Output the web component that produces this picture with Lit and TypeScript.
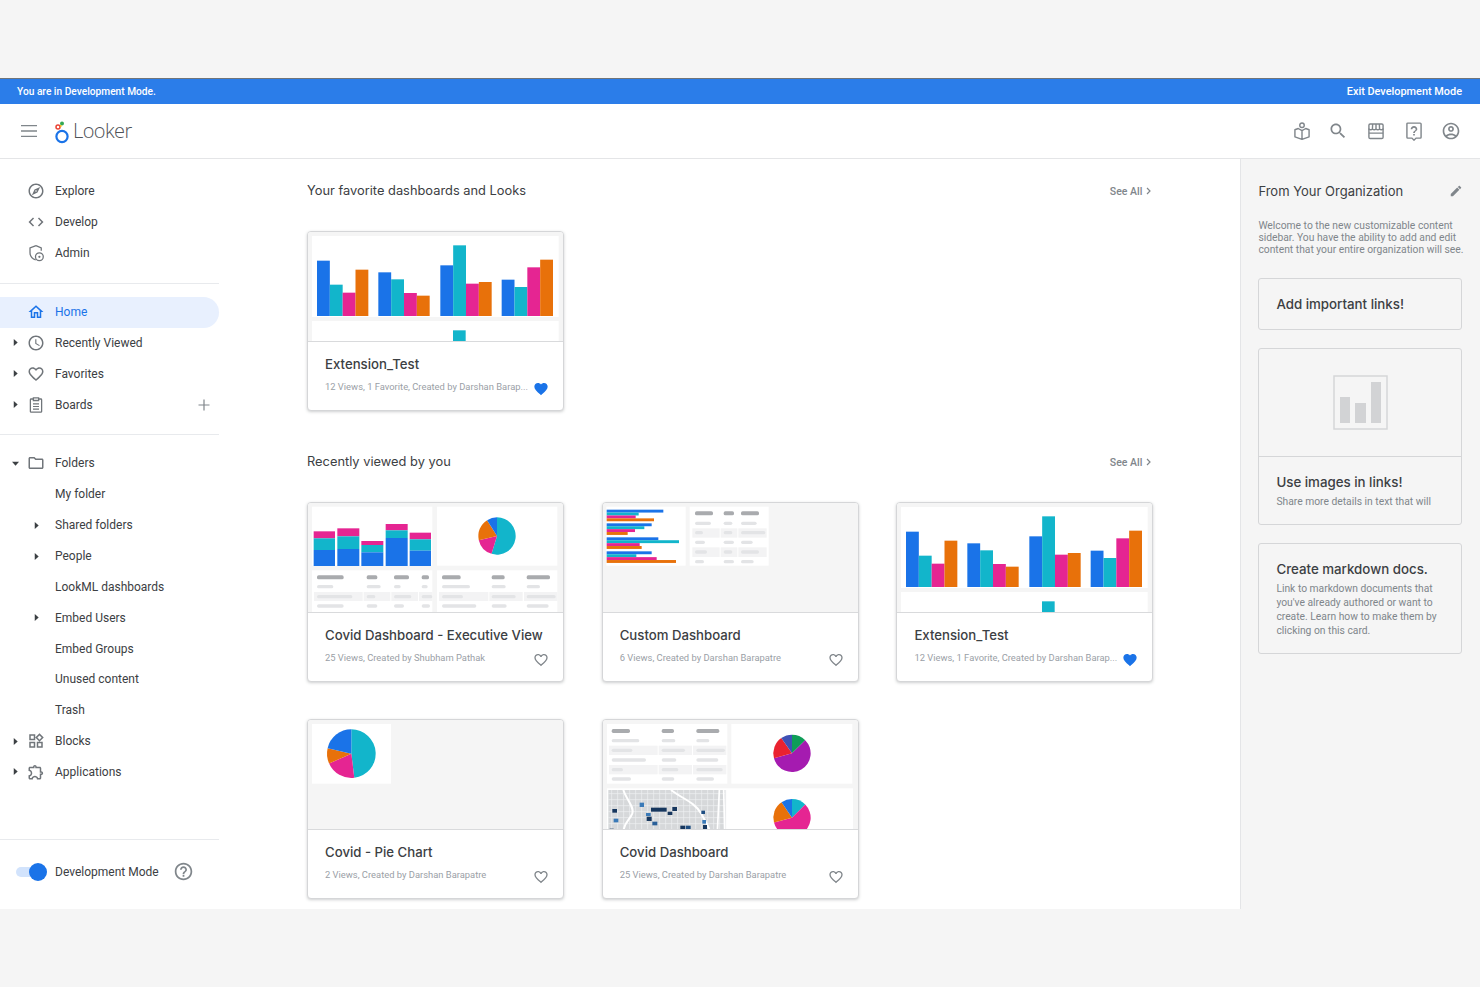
import { LitElement, html, css, svg } from "lit";
import { customElement } from "lit/decorators.js";

const BLUE = "#1a73e8";
const TEAL = "#12b5cb";
const PINK = "#e52592";
const ORANGE = "#e8710a";
const PILL_DARK = "#a9abae";
const PILL_LIGHT = "#e3e4e6";

// all thumbnail drawings use 3x coordinates, 255x109 thumb => 765x327 viewBox
const panel = (x: number, y: number, w: number, h: number) =>
  svg`<rect x=${x} y=${y} width=${w} height=${h} fill="#fff" />`;

const pie = (cx: number, cy: number, r: number, parts: [number, string][]) => {
  let start = 0;
  return parts.map(([end, color]) => {
    const a0 = ((start - 90) * Math.PI) / 180;
    const a1 = ((end - 90) * Math.PI) / 180;
    const large = end - start > 180 ? 1 : 0;
    const d = `M${cx} ${cy}L${cx + r * Math.cos(a0)} ${cy + r * Math.sin(a0)}A${r} ${r} 0 ${large} 1 ${cx + r * Math.cos(a1)} ${cy + r * Math.sin(a1)}Z`;
    start = end;
    return svg`<path d=${d} fill=${color} />`;
  });
};

type Row = [number, number[][]];
const table = (rows: Row[], stripes: number[][]) => svg`
  ${stripes.map(([x, y, w, h]) => svg`<rect x=${x} y=${y} width=${w} height=${h} fill="#f3f3f4" />`)}
  ${rows.map(([y, bars], i) =>
    bars.map(([a, b]) => svg`<rect x=${a} y=${y - (i ? 5 : 6)} width=${b - a} height=${i ? 10 : 12} rx="5" fill=${i ? PILL_LIGHT : PILL_DARK} />`)
  )}
`;

const barsThumb = () => {
  const groups: [number, number[]][] = [
    [51, [107, 179, 203, 134]],
    [235, [142, 163, 204, 212]],
    [421, [121, 61, 176, 171]],
    [605, [164, 186, 127, 104]],
  ];
  const colors = [BLUE, TEAL, PINK, ORANGE];
  return svg`<svg class="thumb" viewBox="24 21 765 327">
    ${panel(36, 33, 740, 243)}
    ${panel(36, 288, 740, 70)}
    ${groups.map(([x, tops]) =>
      tops.map((t, i) => svg`<rect x=${x + i * 38.5} y=${t} width="38.5" height=${273 - t} fill=${colors[i]} />`)
    )}
    <rect x="459" y="316" width="38" height="40" fill=${TEAL} />
  </svg>`;
};

const execThumb = () => {
  const stacks = [
    [41, 105, 109, 130, 165],
    [112, 178, 100, 124, 162],
    [184, 250, 138, 150, 172],
    [257, 323, 87, 106, 129],
    [329, 393, 113, 133, 167],
  ];
  return svg`<svg class="thumb" viewBox="24 24 765 327">
    ${panel(36, 35, 361, 177)}
    ${panel(411, 35, 361, 177)}
    ${panel(36, 226, 361, 130)}
    ${panel(411, 226, 361, 130)}
    ${stacks.map(([a, b, p, t, bl]) => svg`
      <rect x=${a} y=${p} width=${b - a} height=${t - p} fill=${PINK} />
      <rect x=${a} y=${t} width=${b - a} height=${bl - t} fill=${TEAL} />
      <rect x=${a} y=${bl} width=${b - a} height=${213 - bl} fill=${BLUE} />`)}
    ${pie(591, 123, 56, [[197, TEAL], [257, PINK], [328, ORANGE], [360, BLUE]])}
    ${table(
      [
        [247, [[51, 131], [200, 232], [282, 327], [365, 387]]],
        [275, [[51, 100], [200, 242], [282, 302], [365, 383]]],
        [305, [[51, 157], [200, 226], [282, 334], [365, 397]]],
        [333, [[51, 131], [200, 232], [282, 312], [365, 390]]],
      ],
      [[42, 291, 146, 27], [191, 291, 80, 27], [274, 291, 80, 27], [357, 291, 40, 27]]
    )}
    ${table(
      [
        [247, [[426, 482], [575, 614], [680, 750]]],
        [275, [[426, 510], [575, 617], [680, 720]]],
        [305, [[426, 489], [575, 647], [680, 767]]],
        [333, [[426, 529], [575, 620], [680, 746]]],
      ],
      [[417, 291, 148, 27], [568, 291, 100, 27], [672, 291, 100, 27]]
    )}
  </svg>`;
};

const customThumb = () => {
  const hbars: [number, number[]][] = [
    [44, [205, 131, 122, 177]],
    [85, [170, 148, 120, 98]],
    [127, [190, 252, 134, 140]],
    [169, [170, 124, 185, 243]],
  ];
  const colors = [BLUE, TEAL, PINK, ORANGE];
  return svg`<svg class="thumb" viewBox="24 24 765 327">
    ${panel(34, 35, 238, 177)}
    ${panel(284, 35, 237, 177)}
    ${hbars.map(([y, ends]) =>
      ends.map((e, i) => svg`<rect x="35" y=${y + i * 8.7} width=${e - 35} height="8.7" fill=${colors[i]} />`)
    )}
    ${table(
      [
        [55, [[300, 354], [386, 417], [438, 492]]],
        [85, [[300, 348], [386, 412], [438, 485]]],
        [113, [[300, 324], [386, 412], [438, 511]]],
        [142, [[300, 330], [386, 417], [438, 473]]],
        [171, [[300, 336], [386, 412], [438, 492]]],
        [200, [[300, 327], [386, 417], [438, 476]]],
      ],
      [[292, 100, 82, 28], [377, 100, 50, 28], [430, 100, 85, 28], [292, 157, 82, 29], [377, 157, 50, 29], [430, 157, 85, 29]]
    )}
  </svg>`;
};

const pieThumb = () => svg`<svg class="thumb" viewBox="24 15 765 327">
  ${panel(36, 27, 237, 179)}
  ${pie(154, 116, 73, [[173, TEAL], [246, PINK], [283, ORANGE], [360, BLUE]])}
</svg>`;

const mapBlocks: [number, number, number, number, string][] = [
  [168, 278, 47, 12, "#17375e"],
  [218, 290, 14, 10, "#17375e"],
  [232, 276, 14, 12, "#17375e"],
  [52, 282, 14, 11, "#17375e"],
  [155, 305, 15, 13, "#17375e"],
  [172, 320, 15, 11, "#2a6099"],
  [134, 263, 13, 13, "#3a7ab8"],
  [153, 294, 14, 9, "#3a7ab8"],
  [56, 311, 14, 11, "#3a7ab8"],
  [319, 287, 11, 10, "#1f4e82"],
  [322, 315, 11, 11, "#3a7ab8"],
  [324, 330, 12, 15, "#17375e"],
  [256, 332, 14, 13, "#17375e"],
  [272, 332, 15, 13, "#1f4e82"],
  [44, 341, 12, 4, "#17375e"],
];

const covidThumb = () => {
  const xs = Array.from({ length: 20 }, (_, i) => 50 + i * 18);
  const ys = Array.from({ length: 7 }, (_, i) => 236 + i * 18);
  return svg`<svg class="thumb" viewBox="24 15 765 327">
    ${panel(36, 27, 361, 179)}
    ${panel(409, 27, 363, 179)}
    ${panel(36, 220, 738, 130)}
    ${table(
      [
        [48, [[50, 105], [200, 237], [304, 373]]],
        [77, [[50, 133], [200, 241], [304, 343]]],
        [106, [[50, 112], [200, 270], [304, 390]]],
        [135, [[50, 153], [200, 244], [304, 370]]],
        [164, [[50, 84], [200, 250], [304, 383]]],
        [192, [[50, 108], [200, 238], [304, 357]]],
      ],
      [[42, 92, 146, 28], [191, 92, 100, 28], [294, 92, 100, 28], [42, 150, 146, 28], [191, 150, 100, 28], [294, 150, 100, 28]]
    )}
    <rect x="40" y="225" width="352" height="125" fill="#d6d8da" />
    ${xs.map((x) => svg`<line x1=${x} y1="225" x2=${x} y2="350" stroke="#eff0f1" stroke-width="2" />`)}
    ${ys.map((y) => svg`<line x1="40" y1=${y} x2="392" y2=${y} stroke="#eff0f1" stroke-width="2" />`)}
    <path d="M85 225C95 255 118 275 112 295C105 315 88 320 85 350" fill="none" stroke="#fff" stroke-width="6" />
    <path d="M228 225C260 250 300 262 318 295C332 320 340 335 346 350" fill="none" stroke="#fff" stroke-width="6" />
    <path d="M373 225L367 350M386 225L389 350" fill="none" stroke="#fff" stroke-width="5" />
    ${mapBlocks.map(([x, y, w, h, c]) => svg`<rect x=${x} y=${y} width=${w} height=${h} fill=${c} />`)}
    ${pie(591, 115, 56, [[45, "#0f9d58"], [255, "#a51bb0"], [325, "#ea2230"], [360, "#3f51b5"]])}
    ${pie(591, 308, 56, [[45, TEAL], [255, PINK], [326, ORANGE], [360, BLUE]])}
  </svg>`;
};

const ICONS: Record<string, ReturnType<typeof svg>> = {
  explore: svg`<path d="M12 2C6.48 2 2 6.48 2 12s4.48 10 10 10 10-4.48 10-10S17.52 2 12 2zm0 18c-4.41 0-8-3.59-8-8s3.59-8 8-8 8 3.59 8 8-3.59 8-8 8zm-5.5-2.5l7.51-3.49L17.5 6.5 9.99 9.99 6.5 17.5zm5.5-6.6c.61 0 1.1.49 1.1 1.1s-.49 1.1-1.1 1.1-1.1-.49-1.1-1.1.49-1.1 1.1-1.1z" />`,
  code: svg`<path d="M9.4 16.6L4.8 12l4.6-4.6L8 6l-6 6 6 6 1.4-1.4zm5.2 0l4.6-4.6-4.6-4.6L16 6l6 6-6 6-1.4-1.4z" />`,
  admin: svg`<path d="M12 2.2L4 5.2v6c0 4.8 3.2 8.6 7.6 10" fill="none" stroke="currentColor" stroke-width="1.7" /><path d="M12 2.2l7 2.9v4" fill="none" stroke="currentColor" stroke-width="1.7" /><circle cx="16.5" cy="17" r="5.2" fill="none" stroke="currentColor" stroke-width="1.7" /><circle cx="16.5" cy="17" r="1.5" />`,
  home: svg`<path d="M12 5.69l5 4.5V18h-2v-6H9v6H7v-7.81l5-4.5M12 3L2 12h3v8h6v-6h2v6h6v-8h3L12 3z" />`,
  clock: svg`<path d="M11.99 2C6.47 2 2 6.48 2 12s4.47 10 9.99 10C17.52 22 22 17.52 22 12S17.52 2 11.99 2zM12 20c-4.42 0-8-3.58-8-8s3.58-8 8-8 8 3.58 8 8-3.58 8-8 8zm.5-13H11v6l5.25 3.15.75-1.23-4.5-2.67z" />`,
  heart: svg`<path d="M16.5 3c-1.74 0-3.41.81-4.5 2.09C10.91 3.81 9.24 3 7.5 3 4.42 3 2 5.42 2 8.5c0 3.78 3.4 6.86 8.55 11.54L12 21.35l1.45-1.32C18.6 15.36 22 12.28 22 8.5 22 5.42 19.58 3 16.5 3zm-4.4 15.55l-.1.1-.1-.1C7.14 14.24 4 11.39 4 8.5 4 6.5 5.5 5 7.5 5c1.54 0 3.04.99 3.57 2.36h1.87C13.46 5.99 14.96 5 16.5 5c2 0 3.5 1.5 3.5 3.5 0 2.89-3.14 5.74-7.9 10.05z" />`,
  heartFull: svg`<path d="M12 21.35l-1.45-1.32C5.4 15.36 2 12.28 2 8.5 2 5.42 4.42 3 7.5 3c1.74 0 3.41.81 4.5 2.09C13.09 3.81 14.76 3 16.5 3 19.58 3 22 5.42 22 8.5c0 3.78-3.4 6.86-8.55 11.54L12 21.35z" />`,
  board: svg`<path d="M8.5 4H5.5A1 1 0 0 0 4.5 5v15.5a1 1 0 0 0 1 1h13a1 1 0 0 0 1-1V5a1 1 0 0 0-1-1h-3" fill="none" stroke="currentColor" stroke-width="1.7" /><path d="M8.5 2.5h7V6h-7z" fill="none" stroke="currentColor" stroke-width="1.7" /><path d="M8 10.5h8M8 14h8M8 17.5h8" stroke="currentColor" stroke-width="1.6" />`,
  folder: svg`<path d="M20 6h-8l-2-2H4c-1.1 0-1.99.9-1.99 2L2 18c0 1.1.9 2 2 2h16c1.1 0 2-.9 2-2V8c0-1.1-.9-2-2-2zm0 12H4V6h5.17l2 2H20v10z" />`,
  blocks: svg`<path d="M16.66 4.52l2.83 2.83-2.83 2.83-2.83-2.83 2.83-2.83M9 5v4H5V5h4m10 10v4h-4v-4h4M9 15v4H5v-4h4m7.66-13.31L11 7.34 16.66 13l5.66-5.66-5.66-5.65zM11 3H3v8h8V3zm10 10h-8v8h8v-8zm-10 0H3v8h8v-8z" />`,
  apps: svg`<path d="M10.5 4.5c.28 0 .5.22.5.5v2h6v6h2c.28 0 .5.22.5.5s-.22.5-.5.5h-2v6h-2.12c-.68-1.75-2.39-3-4.38-3s-3.7 1.25-4.38 3H4v-2.12c1.75-.68 3-2.39 3-4.38 0-1.99-1.24-3.7-2.99-4.38L4 7h6V5c0-.28.22-.5.5-.5m0-2C9.12 2.5 8 3.62 8 5H4c-1.1 0-1.99.9-1.99 2v3.8h.29c1.49 0 2.7 1.21 2.7 2.7s-1.21 2.7-2.7 2.7H2V20c0 1.1.9 2 2 2h3.8v-.3c0-1.49 1.21-2.7 2.7-2.7s2.7 1.21 2.7 2.7v.3H17c1.1 0 2-.9 2-2v-4c1.38 0 2.5-1.12 2.5-2.5S20.38 11 19 11V7c0-1.1-.9-2-2-2h-4c0-1.38-1.12-2.5-2.5-2.5z" />`,
  help: svg`<path d="M11 18h2v-2h-2v2zm1-16C6.48 2 2 6.48 2 12s4.48 10 10 10 10-4.48 10-10S17.52 2 12 2zm0 18c-4.41 0-8-3.59-8-8s3.59-8 8-8 8 3.59 8 8-3.59 8-8 8zm0-14c-2.21 0-4 1.79-4 4h2c0-1.1.9-2 2-2s2 .9 2 2c0 2-3 1.75-3 5h2c0-2.25 3-2.5 3-5 0-2.21-1.79-4-4-4z" />`,
  search: svg`<path d="M15.5 14h-.79l-.28-.27C15.41 12.59 16 11.11 16 9.5 16 5.91 13.09 3 9.5 3S3 5.91 3 9.5 5.91 16 9.5 16c1.61 0 3.09-.59 4.23-1.57l.27.28v.79l5 4.99L20.49 19l-4.99-5zm-6 0C7.01 14 5 11.99 5 9.5S7.01 5 9.5 5 14 7.01 14 9.5 11.99 14 9.5 14z" />`,
  account: svg`<path d="M12 2C6.48 2 2 6.48 2 12s4.48 10 10 10 10-4.48 10-10S17.52 2 12 2zM7.35 18.5C8.66 17.56 10.26 17 12 17s3.34.56 4.65 1.5C15.34 19.44 13.74 20 12 20s-3.34-.56-4.65-1.5zm10.79-1.38C16.45 15.8 14.32 15 12 15s-4.45.8-6.14 2.12C4.7 15.73 4 13.95 4 12c0-4.42 3.58-8 8-8s8 3.58 8 8c0 1.95-.7 3.73-1.86 5.12zM12 6c-1.93 0-3.5 1.57-3.5 3.5S10.07 13 12 13s3.5-1.57 3.5-3.5S13.93 6 12 6zm0 5c-.83 0-1.5-.67-1.5-1.5S11.17 8 12 8s1.5.67 1.5 1.5S12.83 11 12 11z" />`,
  learn: svg`<circle cx="12" cy="5" r="2.7" fill="none" stroke="currentColor" stroke-width="1.7" /><path d="M3.5 10.5l4-1.5 4.5 2.5L16.5 9l4 1.5V19L12 22l-8.500-3zM12 11.500V22" fill="none" stroke="currentColor" stroke-width="1.7" stroke-linejoin="round" />`,
  market: svg`<path d="M3.5 9v10.5A1.5 1.5 0 0 0 5 21h14a1.5 1.5 0 0 0 1.5-1.5V9" fill="none" stroke="currentColor" stroke-width="1.7" /><path d="M5 3.5h14A1.5 1.5 0 0 1 20.5 5v4.5a2.8 2.8 0 0 1-4.25 0 2.8 2.8 0 0 1-4.25 0 2.8 2.8 0 0 1-4.25 0 2.8 2.8 0 0 1-4.25 0V5A1.5 1.5 0 0 1 5 3.5zM8 3.5L7.7 9.5M12 3.5v6M16 3.5l.3 6M3.5 14.5h17" fill="none" stroke="currentColor" stroke-width="1.7" />`,
  question: svg`<path d="M4.5 2.5h15a1 1 0 0 1 1 1v16a1 1 0 0 1-1 1h-5L12 23l-2.5-2.5h-5a1 1 0 0 1-1-1v-16a1 1 0 0 1 1-1z" fill="none" stroke="currentColor" stroke-width="1.7" /><path d="M11 17.5h2v-2h-2zM12 6c-2.21 0-4 1.79-4 4h2c0-1.1.9-2 2-2s2 .9 2 2c0 2-3 1.75-3 4.5h2c0-2.25 3-2.5 3-4.5 0-2.21-1.79-4-4-4z" />`,
  pencil: svg`<path d="M3 17.25V21h3.75L17.81 9.94l-3.75-3.75L3 17.25zM20.71 7.04c.39-.39.39-1.02 0-1.41l-2.34-2.34c-.39-.39-1.02-.39-1.41 0l-1.83 1.83 3.75 3.75 1.83-1.83z" />`,
};

const icon = (name: string, cls = "") =>
  html`<svg class="icon ${cls}" viewBox="0 0 24 24" fill="currentColor">${ICONS[name]}</svg>`;

const caret = (open = false) =>
  open
    ? html`<svg class="caret" viewBox="0 0 8 8"><path d="M0 2h8L4 6.5z" /></svg>`
    : html`<svg class="caret" viewBox="0 0 8 8"><path d="M2 0l4.5 4L2 8z" /></svg>`;

const logo = html`<svg class="logo-mark" viewBox="0 0 16 26">
  <circle cx="8" cy="18.5" r="5.6" fill="none" stroke="#1a73e8" stroke-width="2.2" />
  <circle cx="4" cy="9" r="2" fill="none" stroke="#ea4335" stroke-width="1.5" />
  <circle cx="8" cy="5.5" r="2" fill="#34a853" />
  <circle cx="6.8" cy="8" r="0.9" fill="#fbbc04" />
</svg>`;

@customElement("nav-row")
class NavRow extends LitElement {
  static properties = {
    label: {},
    ico: {},
    arrow: {},
    sub: { type: Boolean },
    active: { type: Boolean, reflect: true },
    plus: { type: Boolean },
  };
  declare label: string;
  declare ico: string;
  declare arrow: string;
  declare sub: boolean;
  declare active: boolean;
  declare plus: boolean;

  static styles = css`
    :host {
      display: flex;
      align-items: center;
      height: 30.85px;
      width: 219px;
      font: 400 12px Roboto, sans-serif;
      color: #3c4043;
    }
    :host([active]) {
      height: 31px;
      background: #e8f0fe;
      border-radius: 0 16px 16px 0;
      color: #1a73e8;
    }
    .slot-a {
      width: 28px;
      padding-left: 12px;
      box-sizing: border-box;
      display: flex;
      align-items: center;
    }
    .slot-b {
      width: 27px;
      display: flex;
      align-items: center;
    }
    .icon {
      width: 18px;
      height: 18px;
      margin-left: -1px;
      color: #70757a;
    }
    :host([active]) .icon {
      color: #1a73e8;
    }
    .caret {
      width: 7px;
      height: 7px;
      fill: #3c4043;
    }
    .slot-b .caret {
      margin-left: 5px;
    }
    .label {
      flex: 1;
    }
    .plus {
      width: 16px;
      height: 16px;
      margin-right: 7px;
      stroke: #80868b;
      stroke-width: 1.2;
    }
  `;

  render() {
    return html`
      <span class="slot-a">${!this.sub && this.arrow ? caret(this.arrow === "open") : ""}</span>
      <span class="slot-b">${this.ico ? icon(this.ico) : this.sub && this.arrow ? caret() : ""}</span>
      <span class="label">${this.label}</span>
      ${this.plus ? html`<svg class="plus" viewBox="0 0 16 16"><path d="M8 2.5v11M2.5 8h11" /></svg>` : ""}
    `;
  }
}

@customElement("content-card")
class ContentCard extends LitElement {
  static properties = {
    heading: {},
    meta: {},
    fav: { type: Boolean },
    thumb: { attribute: false },
  };
  declare heading: string;
  declare meta: string;
  declare fav: boolean;
  declare thumb: unknown;

  static styles = css`
    :host {
      display: block;
      height: 180px;
      box-sizing: border-box;
      background: #fff;
      border: 1px solid #d5d6d8;
      border-radius: 4px;
      box-shadow: 0 1px 3px rgba(60, 64, 67, 0.25);
      overflow: hidden;
    }
    .thumb-box {
      height: 109px;
      background: #f5f5f5;
      border-bottom: 1px solid #d9dadc;
    }
    .thumb-box svg {
      display: block;
      width: 255px;
      height: 109px;
    }
    .body {
      padding: 12px 14px 0 17px;
    }
    .title {
      font: 500 13.2px/20px Inter, Roboto, sans-serif;
      color: #3c4043;
      white-space: nowrap;
    }
    .meta-row {
      display: flex;
      align-items: center;
      justify-content: space-between;
      height: 20px;
      margin-top: 3px;
    }
    .meta {
      font: 400 9.4px/14px Roboto, sans-serif;
      color: #9aa0a6;
      white-space: nowrap;
    }
    .icon {
      width: 16px;
      height: 16px;
      margin-top: 4px;
      color: #80868b;
    }
    .icon.on {
      color: #1a73e8;
    }
  `;

  render() {
    return html`
      <div class="thumb-box">${this.thumb}</div>
      <div class="body">
        <div class="title">${this.heading}</div>
        <div class="meta-row">
          <span class="meta">${this.meta}</span>
          ${this.fav ? icon("heartFull", "on") : icon("heart")}
        </div>
      </div>
    `;
  }
}

@customElement("app-root")
class AppRoot extends LitElement {
  static styles = css`
    :host {
      display: block;
      width: 1480px;
      height: 987px;
      background: #f5f5f5;
      font-family: Roboto, sans-serif;
      overflow: hidden;
    }
    .page-top {
      height: 78px;
    }
    .dev-bar {
      height: 25px;
      border-top: 1px solid #70757a;
      background: #2b7de9;
      color: #fff;
      font-weight: 500;
      display: flex;
      align-items: center;
      justify-content: space-between;
      padding: 0 18px 0 17px;
    }
    .dev-note {
      font-size: 10.2px;
    }
    .dev-exit {
      font-size: 10.9px;
    }
    .header {
      height: 54px;
      background: #fff;
      border-bottom: 1px solid #e4e5e7;
      display: flex;
      align-items: center;
      padding: 0 19px 0 21px;
    }
    .burger {
      width: 16px;
      height: 12px;
      stroke: #80868b;
      stroke-width: 1.3;
      margin-right: 17px;
    }
    .logo-mark {
      width: 16px;
      height: 26px;
      margin-right: 3px;
    }
    .logo-text {
      font: 300 20px "Open Sans", sans-serif;
      letter-spacing: -0.6px;
      color: #4f5358;
      margin-top: -1px;
    }
    .tools {
      margin-left: auto;
      display: flex;
      gap: 17.5px;
      color: #80868b;
    }
    .tools .icon {
      width: 20px;
      height: 20px;
    }
    .tools .icon:nth-child(2) {
      margin: 0 0.5px 0 -1px;
    }
    .columns {
      display: flex;
      height: 750px;
      background: #fff;
    }
    .side {
      width: 220px;
      flex: none;
      display: flex;
      flex-direction: column;
      padding-top: 17px;
      box-sizing: border-box;
    }
    .side hr {
      border: 0;
      height: 1px;
      width: 219px;
      background: #e8eaed;
      margin: 14px 0 13px;
    }
    .side-foot {
      margin-top: auto;
      height: 70px;
      box-sizing: border-box;
      width: 219px;
      border-top: 1px solid #e8eaed;
      display: flex;
      align-items: center;
      padding: 0 0 6px 16px;
      font-size: 12px;
      color: #3c4043;
    }
    .toggle {
      position: relative;
      width: 20px;
      height: 10px;
      background: #d2e3fc;
      border-radius: 5px;
      margin-right: 19px;
    }
    .knob {
      position: absolute;
      left: 13px;
      top: -4px;
      width: 18px;
      height: 18px;
      border-radius: 50%;
      background: #1a73e8;
    }
    .side-foot .icon {
      width: 21px;
      height: 21px;
      margin-left: 14px;
      color: #80868b;
    }
    .main {
      flex: 1;
      padding: 20px 87px 0 87px;
      box-sizing: border-box;
    }
    .sec-head {
      display: flex;
      align-items: center;
      justify-content: space-between;
      height: 22px;
      margin-bottom: 30px;
      font: 400 12.85px Inter, Roboto, sans-serif;
      color: #3c4043;
    }
    .see {
      font: 500 10.5px Roboto, sans-serif;
      color: #80868b;
      display: flex;
      align-items: center;
      gap: 4px;
      margin-top: 2px;
      padding-right: 2px;
    }
    .see svg {
      width: 5px;
      height: 8px;
      fill: none;
      stroke: #80868b;
      stroke-width: 1.2;
    }
    .grid {
      display: grid;
      grid-template-columns: repeat(3, 257px);
      column-gap: 37.7px;
      row-gap: 37px;
    }
    .sec + .sec {
      margin-top: 39px;
    }
    .aside {
      width: 240px;
      flex: none;
      box-sizing: border-box;
      background: #f5f5f5;
      border-left: 1px solid #e4e5e7;
      padding: 21px 18px 0 17px;
    }
    .aside-head {
      display: flex;
      align-items: center;
      justify-content: space-between;
      height: 22px;
      font: 400 13px Inter, Roboto, sans-serif;
      color: #3c4043;
    }
    .aside-head .icon {
      width: 14px;
      height: 14px;
      margin-right: -1px;
      color: #80868b;
    }
    .intro {
      margin: 18px -6px 22px 0;
      font-size: 10.3px;
      line-height: 12px;
      color: #80868b;
    }
    .link-card {
      border: 1.5px solid #d5d6d8;
      border-radius: 3px;
      margin-bottom: 18px;
      color: #3c4043;
    }
    .link-title {
      font: 500 13.3px/20px Inter, Roboto, sans-serif;
    }
    .link-pad {
      padding: 15px 17px;
    }
    .link-art {
      height: 107px;
      display: flex;
      align-items: center;
      justify-content: center;
      border-bottom: 1.5px solid #d5d6d8;
    }
    .link-art svg {
      width: 55px;
      height: 55px;
    }
    .link-text {
      font-size: 10.3px;
      line-height: 14px;
      margin-top: 3px;
      color: #80868b;
    }
    .page-bottom {
      height: 78px;
    }
  `;

  render() {
    return html`
      <div class="page-top"></div>
      <div class="dev-bar">
        <span class="dev-note">You are in Development Mode.</span>
        <span class="dev-exit">Exit Development Mode</span>
      </div>
      <div class="header">
        <svg class="burger" viewBox="0 0 16 12"><path d="M0 .7h16M0 6h16M0 11.3h16" /></svg>
        ${logo}
        <span class="logo-text">Looker</span>
        <div class="tools">
          ${icon("learn")} ${icon("search")} ${icon("market")} ${icon("question")} ${icon("account")}
        </div>
      </div>
      <div class="columns">
        <nav class="side">
          <nav-row label="Explore" ico="explore"></nav-row>
          <nav-row label="Develop" ico="code"></nav-row>
          <nav-row label="Admin" ico="admin"></nav-row>
          <hr />
          <nav-row label="Home" ico="home" active></nav-row>
          <nav-row label="Recently Viewed" ico="clock" arrow="closed"></nav-row>
          <nav-row label="Favorites" ico="heart" arrow="closed"></nav-row>
          <nav-row label="Boards" ico="board" arrow="closed" plus></nav-row>
          <hr />
          <nav-row label="Folders" ico="folder" arrow="open"></nav-row>
          <nav-row label="My folder" sub></nav-row>
          <nav-row label="Shared folders" sub arrow="closed"></nav-row>
          <nav-row label="People" sub arrow="closed"></nav-row>
          <nav-row label="LookML dashboards" sub></nav-row>
          <nav-row label="Embed Users" sub arrow="closed"></nav-row>
          <nav-row label="Embed Groups" sub></nav-row>
          <nav-row label="Unused content" sub></nav-row>
          <nav-row label="Trash" sub></nav-row>
          <nav-row label="Blocks" ico="blocks" arrow="closed"></nav-row>
          <nav-row label="Applications" ico="apps" arrow="closed"></nav-row>
          <div class="side-foot">
            <span class="toggle"><span class="knob"></span></span>
            <span>Development Mode</span>
            ${icon("help")}
          </div>
        </nav>
        <main class="main">
          <section class="sec">
            <div class="sec-head">
              <span>Your favorite dashboards and Looks</span>
              <span class="see">See All <svg viewBox="0 0 5 8"><path d="M1 1l3 3-3 3" /></svg></span>
            </div>
            <div class="grid">
              <content-card heading="Extension_Test" meta="12 Views, 1 Favorite, Created by Darshan Barap..." fav .thumb=${barsThumb()}></content-card>
            </div>
          </section>
          <section class="sec">
            <div class="sec-head">
              <span>Recently viewed by you</span>
              <span class="see">See All <svg viewBox="0 0 5 8"><path d="M1 1l3 3-3 3" /></svg></span>
            </div>
            <div class="grid">
              <content-card heading="Covid Dashboard - Executive View" meta="25 Views, Created by Shubham Pathak" .thumb=${execThumb()}></content-card>
              <content-card heading="Custom Dashboard" meta="6 Views, Created by Darshan Barapatre" .thumb=${customThumb()}></content-card>
              <content-card heading="Extension_Test" meta="12 Views, 1 Favorite, Created by Darshan Barap..." fav .thumb=${barsThumb()}></content-card>
              <content-card heading="Covid - Pie Chart" meta="2 Views, Created by Darshan Barapatre" .thumb=${pieThumb()}></content-card>
              <content-card heading="Covid Dashboard" meta="25 Views, Created by Darshan Barapatre" .thumb=${covidThumb()}></content-card>
            </div>
          </section>
        </main>
        <aside class="aside">
          <div class="aside-head"><span>From Your Organization</span>${icon("pencil")}</div>
          <p class="intro">Welcome to the new customizable content sidebar. You have the ability to add and edit content that your entire organization will see.</p>
          <div class="link-card"><div class="link-pad link-title">Add important links!</div></div>
          <div class="link-card">
            <div class="link-art">
              <svg viewBox="0 0 55 55">
                <rect x="1" y="1" width="53" height="53" fill="none" stroke="#d5d6d8" stroke-width="1.5" />
                <rect x="7" y="22" width="10" height="26" fill="#d2d3d5" />
                <rect x="22" y="28" width="11" height="20" fill="#d2d3d5" />
                <rect x="38" y="7" width="10" height="41" fill="#d2d3d5" />
              </svg>
            </div>
            <div class="link-pad">
              <div class="link-title">Use images in links!</div>
              <div class="link-text">Share more details in text that will</div>
            </div>
          </div>
          <div class="link-card">
            <div class="link-pad">
              <div class="link-title">Create markdown docs.</div>
              <div class="link-text">Link to markdown documents that you've already authored or want to create. Learn how to make them by clicking on this card.</div>
            </div>
          </div>
        </aside>
      </div>
      <div class="page-bottom"></div>
    `;
  }
}
